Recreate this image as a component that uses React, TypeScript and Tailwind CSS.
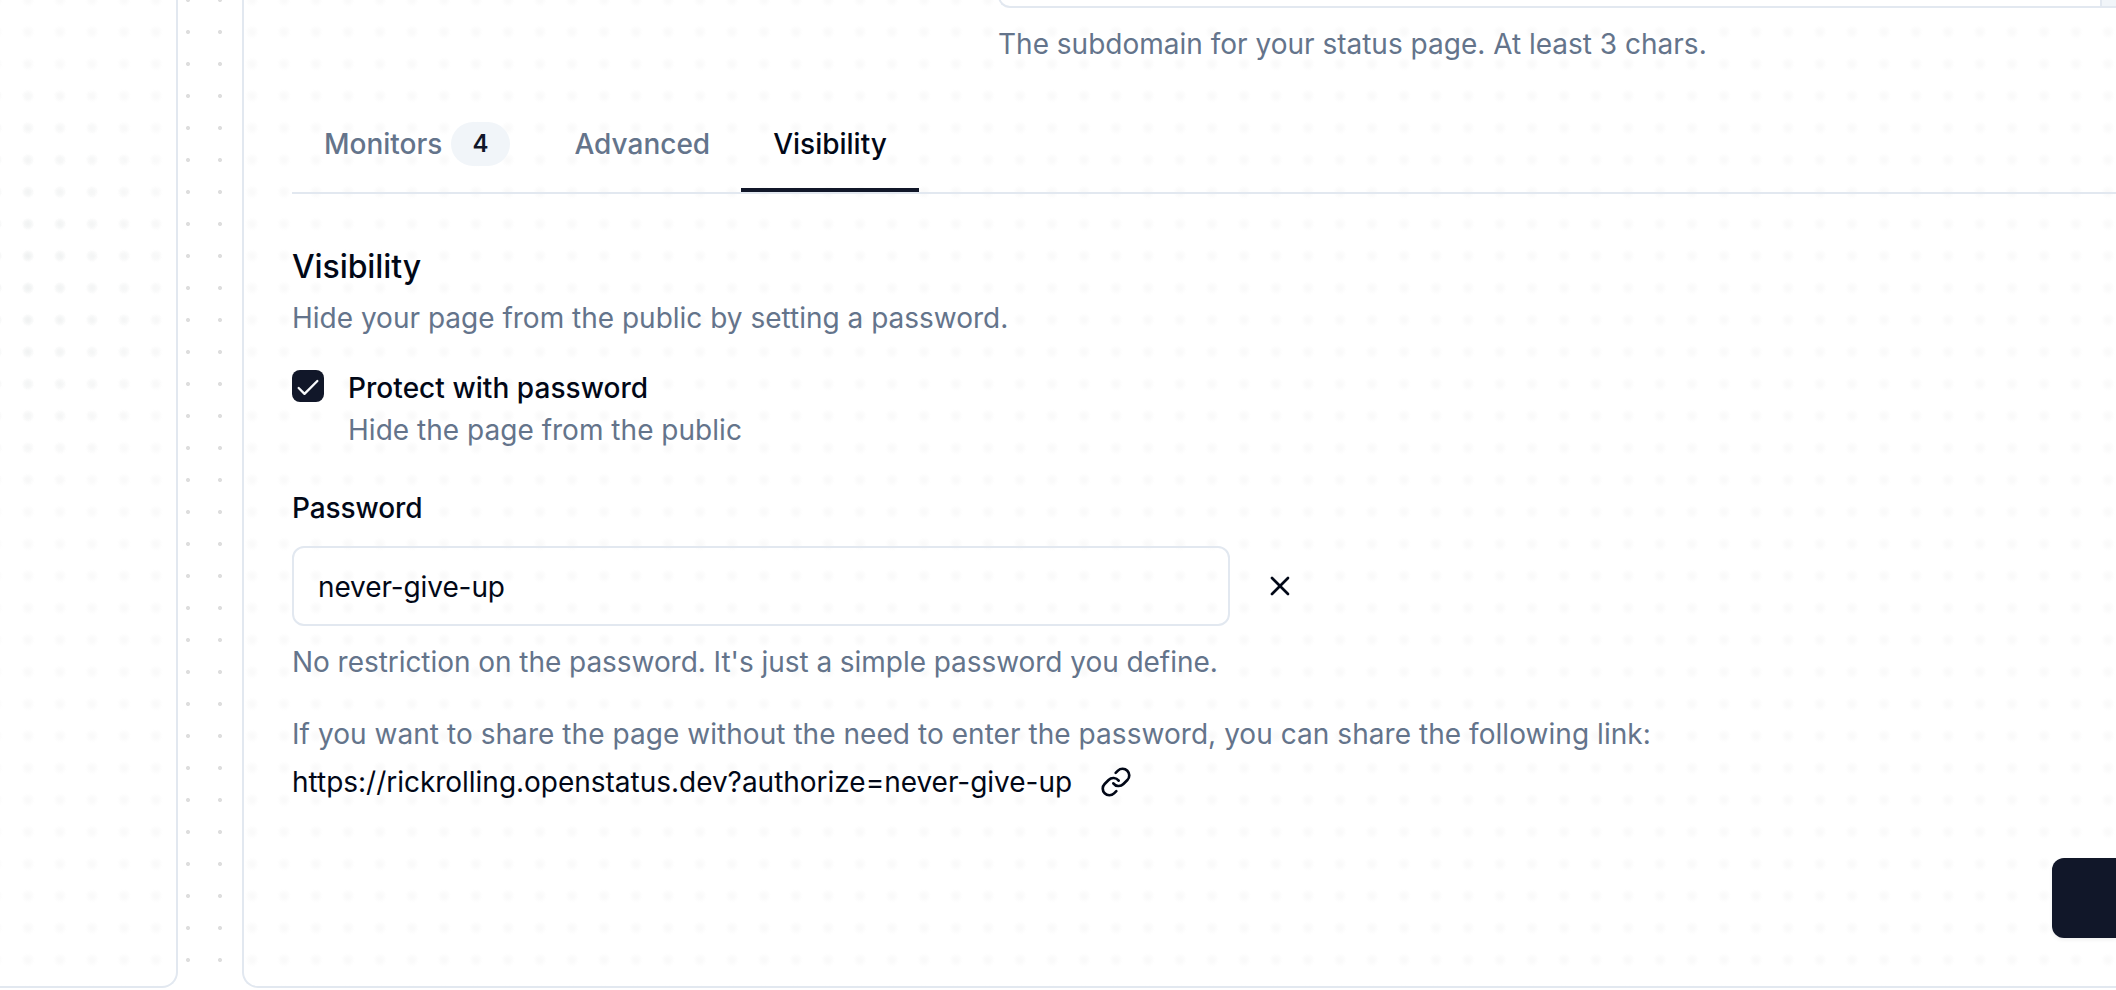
import { Check, Link, X } from "lucide-react";

const glow =
  "bg-[radial-gradient(circle_at_16px_16px,#fafafa_0px,#fafafa_2px,#fdfdfd_5px,transparent_7px)] bg-[length:32px_32px]";

function Tab({ label, count, active }: { label: string; count?: number; active?: boolean }) {
  return (
    <button
      className={
        active
          ? "-ml-px flex h-[108px] items-center border-b-4 border-[#111729] px-8 pt-4 font-medium text-[#020817]"
          : "flex h-[108px] items-center border-b-4 border-transparent px-8 pt-4 font-medium text-[#64748b]"
      }
    >
      {label}
      {count !== undefined && (
        <span className="ml-[9px] rounded-full border-2 border-transparent bg-[#f1f5f9] bg-clip-border py-1 pr-5 pl-[19px] text-[24px] leading-8 font-semibold text-[#111729]">
          {count}
        </span>
      )}
    </button>
  );
}

export default function App() {
  return (
    <div className="h-[990px] w-[2116px] overflow-hidden bg-white bg-[radial-gradient(circle_at_16px_16px,#dedede_1.6px,transparent_2.4px)] bg-[length:32px_32px] bg-[position:12px_-16px] font-['Inter','Liberation_Sans',sans-serif] text-[28px] leading-10 text-[#020817]">
      <div className="flex h-[988px] gap-16">
        <aside className={`w-[178px] shrink-0 overflow-hidden rounded-br-2xl border-r-2 border-b-2 border-[#e2e8f0] bg-white bg-[position:12px_-16px] ${glow}`}>
          <div className="h-full bg-[radial-gradient(circle_at_16px_16px,#ecefef_0px,#f1f3f3_3px,transparent_6px)] bg-[length:32px_32px] bg-[position:12px_-16px] [mask-image:radial-gradient(ellipse_190px_230px_at_0px_280px,black,transparent)]" />
        </aside>
        <main className={`flex grow flex-col rounded-bl-2xl border-b-2 border-l-2 border-[#e2e8f0] bg-white bg-[position:-8px_-16px] pb-12 pl-12 ${glow}`}>
          <div className="-mt-[72px] ml-[706px] flex h-20 shrink-0 overflow-hidden rounded-l-xl border-2 border-r-0 border-[#e2e8f0] bg-white">
            <div className="grow" />
            <div className="w-4 border-l-2 border-[#e2e8f0] bg-[#f1f5f9]" />
          </div>
          <p className="mt-4 ml-[706px] text-[#64748b]">The subdomain for your status page. At least 3 chars.</p>

          <nav className="mt-5 flex h-[110px] shrink-0 border-b-2 border-[#e2e8f0]">
            <Tab label="Monitors" count={4} />
            <Tab label="Advanced" />
            <Tab label="Visibility" active />
          </nav>

          <h3 className="mt-[49px] text-[32px] leading-[48px] font-medium tracking-[-0.1px]">Visibility</h3>
          <p className="mt-[7px] text-[#64748b]">Hide your page from the public by setting a password.</p>

          <div className="mt-8 flex gap-6">
            <span className="flex size-8 items-center justify-center rounded-lg bg-[#111729] pt-1">
              <Check className="size-7 text-[#f8fafc]" strokeWidth={2} />
            </span>
            <div className="pt-1">
              <label className="block leading-7 font-medium tracking-[0.05px]">Protect with password</label>
              <p className="mt-2 tracking-[0.02px] text-[#64748b]">Hide the page from the public</p>
            </div>
          </div>

          <label className="mt-11 block leading-7 font-medium tracking-[-0.1px]">Password</label>
          <div className="mt-6 flex items-center">
            <div className="flex h-20 w-[938px] items-center rounded-xl border-2 border-[#e2e8f0] px-6 pt-0.5 tracking-[-0.1px]">never-give-up</div>
            <X className="ml-[34px] size-8" strokeWidth={2} />
          </div>
          <p className="mt-4 tracking-[-0.05px] text-[#64748b]">No restriction on the password. It's just a simple password you define.</p>

          <p className="mt-8 tracking-[0.05px] text-[#64748b]">
            If you want to share the page without the need to enter the password, you can share the following link:
          </p>
          <div className="mt-2 flex h-10 items-center gap-7">
            <span className="tracking-[-0.02px]">https://rickrolling.openstatus.dev?authorize=never-give-up</span>
            <Link className="size-8" strokeWidth={2} />
          </div>

          <div className="mt-auto flex justify-end">
            <button className="h-20 w-16 rounded-l-xl bg-[#111729] shadow-[0_2px_4px_rgba(0,0,0,0.06)]" aria-label="Confirm" />
          </div>
        </main>
      </div>
    </div>
  );
}
